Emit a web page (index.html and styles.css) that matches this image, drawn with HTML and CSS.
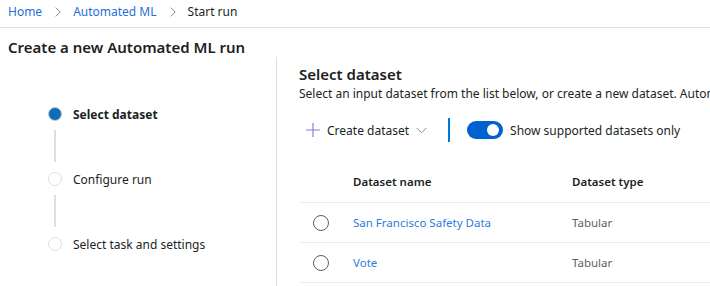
FILE: index.html
```html
<!DOCTYPE html>
<html lang="en-US">
	<head>
		<meta charset="utf-8">
		<title>Start run</title>
		<link rel="stylesheet" href="styles.css">
	</head>
	<body>
		<nav class="crumbs">
			<a href="#">Home</a>
			<svg class="sep" width="6" height="10" viewBox="0 0 6 10"><path d="M0.8 0.6l4.4 4.4-4.4 4.4" stroke="#8a8886" stroke-width="1" fill="none"/></svg>
			<a href="#">Automated ML</a>
			<svg class="sep" width="6" height="10" viewBox="0 0 6 10"><path d="M0.8 0.6l4.4 4.4-4.4 4.4" stroke="#8a8886" stroke-width="1" fill="none"/></svg>
			<span class="current">Start run</span>
		</nav>
		<h1 class="title">Create a new Automated ML run</h1>
		<div class="wizard">
			<ol class="steps">
				<li class="step active"><span class="dot"></span>Select dataset</li>
				<li class="link"></li>
				<li class="step"><span class="dot"></span>Configure run</li>
				<li class="link"></li>
				<li class="step"><span class="dot"></span>Select task and settings</li>
			</ol>
			<main class="panel">
				<h2>Select dataset</h2>
				<p class="desc">Select an input dataset from the list below, or create a new dataset. Automated ML currently supports tabular datasets only.</p>
				<div class="toolbar">
					<button class="create">
						<svg width="14" height="14" viewBox="0 0 14 14"><path d="M7 0v14M0 7h14" stroke="#8a7fd6" stroke-width="1.2" fill="none"/></svg>
						<span>Create dataset</span>
						<svg width="11" height="7" viewBox="0 0 11 7"><path d="M0.5 0.8l5 5 5-5" stroke="#8a8886" stroke-width="1" fill="none"/></svg>
					</button>
					<span class="divider"></span>
					<input id="supported" class="toggle" type="checkbox" checked>
					<label for="supported"><span class="channel"></span><span>Show supported datasets only</span></label>
				</div>
				<table class="datasets">
					<thead>
						<tr><th class="pick"></th><th class="name">Dataset name</th><th>Dataset type</th></tr>
					</thead>
					<tbody>
						<tr><td class="pick"><span class="radio"></span></td><td class="name"><a href="#">San Francisco Safety Data</a></td><td>Tabular</td></tr>
						<tr><td class="pick"><span class="radio"></span></td><td class="name"><a href="#">Vote</a></td><td>Tabular</td></tr>
					</tbody>
				</table>
			</main>
		</div>
	</body>
</html>
```

FILE: styles.css
```css
body {
	color: #201f1e;
	font-family: "Noto Sans", sans-serif;
	margin: 0;
	overflow: hidden;
	width: 710px;
}
a {
	color: #2b7de0;
	text-decoration: none;
}
.crumbs {
	align-items: center;
	border-bottom: 1px solid #e1dfdd;
	box-sizing: border-box;
	display: flex;
	font-size: 12px;
	height: 28px;
	padding: 0 0 4px 8px;
	white-space: nowrap;
}
.crumbs a {
	color: #1f6fd8;
}
.crumbs .sep {
	margin: 0 12px 0 13px;
}
.title {
	font-size: 15px;
	font-weight: 600;
	margin: 9px 0 0 8px;
}
.wizard {
	display: flex;
}
.steps {
	border-right: 1px solid #e1dfdd;
	box-sizing: border-box;
	height: 230px;
	list-style: none;
	margin: 0;
	padding: 47px 0 0 48px;
	width: 277px;
}
.step {
	align-items: center;
	display: flex;
	font-size: 12px;
	height: 20px;
}
.step.active {
	font-weight: 700;
}
.dot {
	border: 1px solid #e1dfdd;
	border-radius: 50%;
	box-sizing: border-box;
	height: 14px;
	margin-right: 11px;
	width: 14px;
}
.active .dot {
	background: #0f6cbd;
	border-color: #c8c6c4;
}
.link {
	border-left: 2px solid #e1dfdd;
	height: 32px;
	margin: 6px 0 7px 6px;
}
.panel {
	flex: 1;
	min-width: 0;
	overflow: hidden;
	padding: 7px 0 0 22px;
}
.panel h2 {
	font-size: 15px;
	font-weight: 600;
	margin: 0;
}
.desc {
	font-size: 12px;
	margin: 1px 0 0;
	white-space: nowrap;
}
.toolbar {
	align-items: center;
	display: flex;
	height: 26px;
	margin-top: 15px;
}
.create {
	align-items: center;
	background: none;
	border: 0;
	color: #201f1e;
	display: flex;
	font: inherit;
	font-size: 12px;
	gap: 7px;
	padding: 0 0 0 7px;
}
.divider {
	background: #0078d4;
	height: 24px;
	margin: 0 17px 0 21px;
	width: 2px;
}
input[type="checkbox"].toggle {
	clip: rect(0, 0, 0, 0);
	position: absolute;
}
.toggle + label {
	align-items: center;
	display: flex;
	font-size: 12px;
	gap: 7px;
}
.toggle + label .channel {
	background: #0062d0;
	border-radius: 9px;
	height: 18px;
	position: relative;
	width: 36px;
}
.toggle + label .channel::before {
	background: #fff;
	border-radius: 50%;
	content: '';
	height: 12px;
	position: absolute;
	right: 4px;
	top: 3px;
	width: 12px;
}
.datasets {
	border-collapse: collapse;
	font-size: 11.5px;
	margin-top: 17px;
	width: 100%;
}
.datasets th,
.datasets td {
	padding: 0;
}
.datasets th {
	font-weight: 600;
	height: 42px;
	text-align: left;
}
.datasets td {
	color: #605e5c;
	height: 39px;
}
.datasets tr {
	border-bottom: 1px solid #edebe9;
}
.datasets .pick {
	padding-left: 14px;
	width: 40px;
}
.datasets .name {
	width: 219px;
}
.radio {
	border: 1px solid #605e5c;
	border-radius: 50%;
	display: block;
	height: 14px;
	width: 14px;
}
```
